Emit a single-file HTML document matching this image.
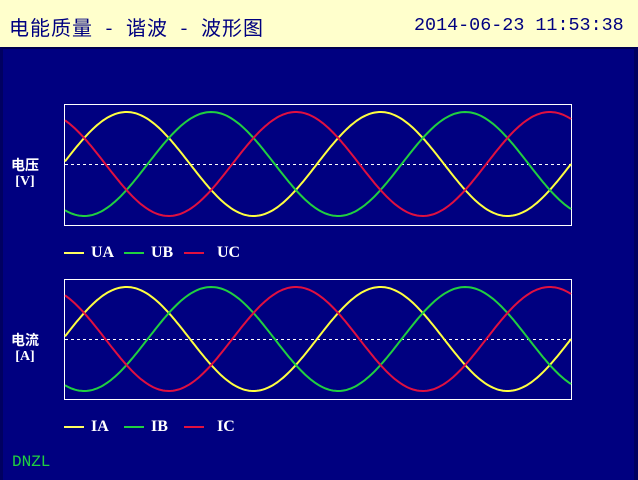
<!DOCTYPE html>
<html><head><meta charset="utf-8"><style>
body{margin:0;width:638px;height:480px;overflow:hidden;background:#000080;font-family:"Liberation Serif","Noto Serif CJK SC",serif;}
#hdr{position:absolute;left:0;top:0;width:638px;height:47px;background:#FFFFCC;}
.t{position:absolute;color:#000080;white-space:nowrap;}
.t span{display:inline-block;text-align:center;}
#frame{position:absolute;left:0;top:47px;width:638px;height:433px;box-sizing:border-box;border-top:2px solid #000050;border-left:3px solid #000060;border-right:4px solid #000060;}
.lbl{position:absolute;color:#fff;font-weight:bold;font-size:14px;line-height:15px;text-align:center;font-family:"Liberation Serif","Noto Sans CJK SC",serif;}
.lg{position:absolute;color:#fff;font-weight:bold;font-size:16px;}
svg{position:absolute;left:0;top:0}
</style></head><body>
<div id="hdr"></div>
<div class="t" style="left:9px;top:12px;font-family:'Noto Sans CJK SC','WenQuanYi Zen Hei',sans-serif;font-size:20px;letter-spacing:1px;">电能质量<span style="width:33px">-</span>谐波<span style="width:33px">-</span>波形图</div>
<div class="t" style="left:414px;top:15px;font-family:'Liberation Mono',monospace;font-size:18.4px;">2014-06-23 11:53:38</div>
<div id="frame"></div>
<svg width="638" height="480" id="s">
<rect x="64.5" y="104.5" width="507" height="121" fill="none" stroke="#fff" stroke-width="1"/>
<line x1="65" y1="164.5" x2="571" y2="164.5" stroke="#fff" stroke-dasharray="3,3"/>
<rect x="64.5" y="279.5" width="507" height="120" fill="none" stroke="#fff" stroke-width="1"/>
<line x1="65" y1="339.5" x2="571" y2="339.5" stroke="#fff" stroke-dasharray="3,3"/>
<line x1="64" y1="253" x2="84" y2="253" stroke="#ffff60" stroke-width="2"/>
<line x1="124" y1="253" x2="144" y2="253" stroke="#20d040" stroke-width="2"/>
<line x1="184" y1="253" x2="204" y2="253" stroke="#e01040" stroke-width="2"/>
<line x1="64" y1="427" x2="84" y2="427" stroke="#ffff60" stroke-width="2"/>
<line x1="124" y1="427" x2="144" y2="427" stroke="#20d040" stroke-width="2"/>
<line x1="184" y1="427" x2="204" y2="427" stroke="#e01040" stroke-width="2"/>
</svg>
<div class="lbl" style="left:11px;top:159px;">电压<br>[V]</div>
<div class="lbl" style="left:11px;top:334px;">电流<br>[A]</div>
<div class="lg" style="left:91px;top:244px;">UA</div>
<div class="lg" style="left:151px;top:244px;">UB</div>
<div class="lg" style="left:217px;top:244px;">UC</div>
<div class="lg" style="left:91px;top:418px;">IA</div>
<div class="lg" style="left:151px;top:418px;">IB</div>
<div class="lg" style="left:217px;top:418px;">IC</div>
<div style="position:absolute;left:12px;top:453px;color:#20d040;font-size:16px;font-family:'Liberation Mono',monospace;">DNZL</div>
<script>
var s=document.getElementById('s'),cols=['#ffff40','#20d040','#e01040'],P=254;
function wave(mid,amp){for(var k=0;k<3;k++){var p=[];for(var x=65;x<=571;x+=2){var y=mid-amp*Math.sin(2*Math.PI*(x-63-k*P/3)/P);p.push(x+','+y.toFixed(1));}
var e=document.createElementNS('http://www.w3.org/2000/svg','polyline');e.setAttribute('points',p.join(' '));e.setAttribute('fill','none');e.setAttribute('stroke',cols[k]);e.setAttribute('stroke-width','2');s.appendChild(e);}}
wave(164,52);wave(339,52);
</script>
</body></html>
